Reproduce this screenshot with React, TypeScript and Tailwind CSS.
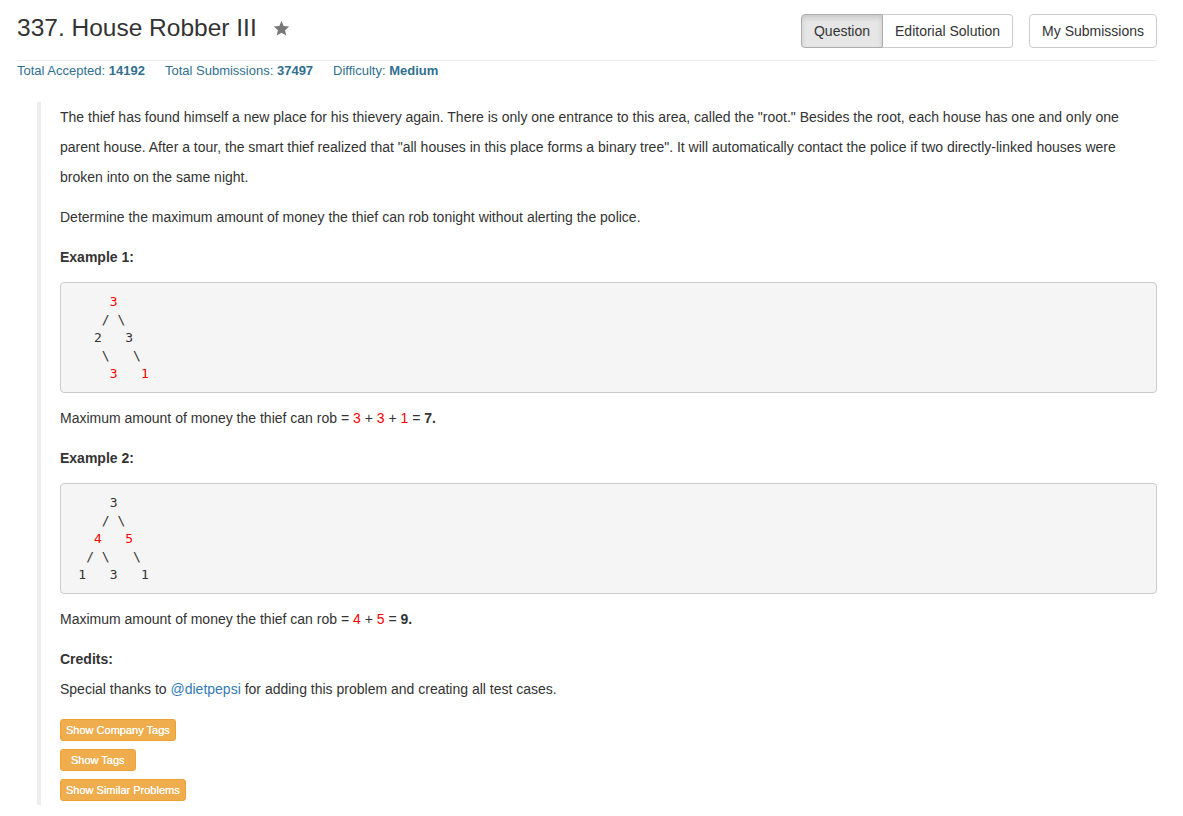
const sans = { fontFamily: '"Liberation Sans", Arial, sans-serif' };

const Red = ({ children }: { children: React.ReactNode }) => (
	<span className="text-[#ff0000]">{children}</span>
);

const StarIcon = () => (
	<svg width="17" height="17" viewBox="0 0 24 24" className="fill-[#777]">
		<path d="M12 1.5l3.1 7.1 7.7.7-5.8 5.1 1.7 7.6L12 18l-6.7 4 1.7-7.6-5.8-5.1 7.7-.7z" />
	</svg>
);

const App = () => {
	return (
		<div className="w-[1183px] bg-white text-[#333]" style={sans}>
			<div className="px-[17px] w-[1174px]">
				{/* Header */}
				<div className="flex justify-between items-start border-b border-[#eee] h-[61px]">
					<div className="flex items-center mt-[15px]">
						<h3 className="text-[24.5px] leading-[26px] font-medium">
							337. House Robber III
						</h3>
						<span className="ml-[16px] mt-[1px]">
							<StarIcon />
						</span>
					</div>
					<div className="flex mt-[14px]">
						<div className="flex">
							<button className="h-[34px] px-[12px] text-[14px] border border-[#adadad] bg-[#e6e6e6] rounded-l-[4px] shadow-[inset_0_3px_5px_rgba(0,0,0,0.125)]">
								Question
							</button>
							<button className="h-[34px] px-[12px] text-[14px] border border-l-0 border-[#ccc] bg-white rounded-r-[4px]">
								Editorial Solution
							</button>
						</div>
						<button className="ml-[16px] h-[34px] px-[12px] text-[14px] border border-[#ccc] bg-white rounded-[4px]">
							My Submissions
						</button>
					</div>
				</div>

				{/* Stats */}
				<div className="flex gap-[20px] mt-[1px] text-[13px] leading-[17px] text-[#31708f]">
					<span>
						Total Accepted: <b>14192</b>
					</span>
					<span>
						Total Submissions: <b>37497</b>
					</span>
					<span>
						Difficulty: <b>Medium</b>
					</span>
				</div>

				{/* Question body */}
				<div className="mt-[23px] ml-[19.5px] border-l-[4px] border-[#eee] pl-[19.5px] pb-[4px] text-[14px] leading-[30px]">
					<p className="mb-[10px]">
						The thief has found himself a new place for his thievery again. There is only one
						entrance to this area, called the "root." Besides the root, each house has one and
						only one parent house. After a tour, the smart thief realized that "all houses in this
						place forms a binary tree". It will automatically contact the police if two
						directly-linked houses were broken into on the same night.
					</p>
					<p className="mb-[10px]">
						Determine the maximum amount of money the thief can rob tonight without alerting the
						police.
					</p>
					<p className="mb-[10px] font-bold">Example 1:</p>
					<pre
						className="mb-[10px] bg-[#f5f5f5] border border-[#ccc] rounded-[4px] px-[9.5px] py-[9.5px] text-[13px] leading-[18px] text-[#333]"
						style={{ fontFamily: '"DejaVu Sans Mono", Menlo, monospace' }}
					>
						{'     '}
						<Red>3</Red>
						{'\n    / \\\n   2   3\n    \\   \\ \n     '}
						<Red>3</Red>
						{'   '}
						<Red>1</Red>
					</pre>
					<p className="mb-[10px]">
						Maximum amount of money the thief can rob = <Red>3</Red> + <Red>3</Red> +{' '}
						<Red>1</Red> = <b>7.</b>
					</p>
					<p className="mb-[10px] font-bold">Example 2:</p>
					<pre
						className="mb-[10px] bg-[#f5f5f5] border border-[#ccc] rounded-[4px] px-[9.5px] py-[9.5px] text-[13px] leading-[18px] text-[#333]"
						style={{ fontFamily: '"DejaVu Sans Mono", Menlo, monospace' }}
					>
						{'     3\n    / \\\n   '}
						<Red>4</Red>
						{'   '}
						<Red>5</Red>
						{'\n  / \\   \\\n 1   3   1'}
					</pre>
					<p className="mb-[10px]">
						Maximum amount of money the thief can rob = <Red>4</Red> + <Red>5</Red> ={' '}
						<b>9.</b>
					</p>
					<p className="mb-[15px]">
						<b>Credits:</b>
						<br />
						Special thanks to <a className="text-[#337ab7]">@dietpepsi</a> for adding this
						problem and creating all test cases.
					</p>

					{/* Tag buttons */}
					<div className="flex flex-col items-start gap-[8px]">
						<button className="h-[22px] px-[5px] text-[11px] leading-[20px] text-white bg-[#f0ad4e] border border-[#eea236] rounded-[3px] [text-shadow:0_0_0.6px_#fff]">
							Show Company Tags
						</button>
						<button className="h-[22px] px-[10px] text-[11px] leading-[20px] text-white bg-[#f0ad4e] border border-[#eea236] rounded-[3px] [text-shadow:0_0_0.6px_#fff]">
							Show Tags
						</button>
						<button className="h-[22px] px-[5px] text-[11px] leading-[20px] text-white bg-[#f0ad4e] border border-[#eea236] rounded-[3px] [text-shadow:0_0_0.6px_#fff]">
							Show Similar Problems
						</button>
					</div>
				</div>
			</div>
		</div>
	);
};

export default App;
